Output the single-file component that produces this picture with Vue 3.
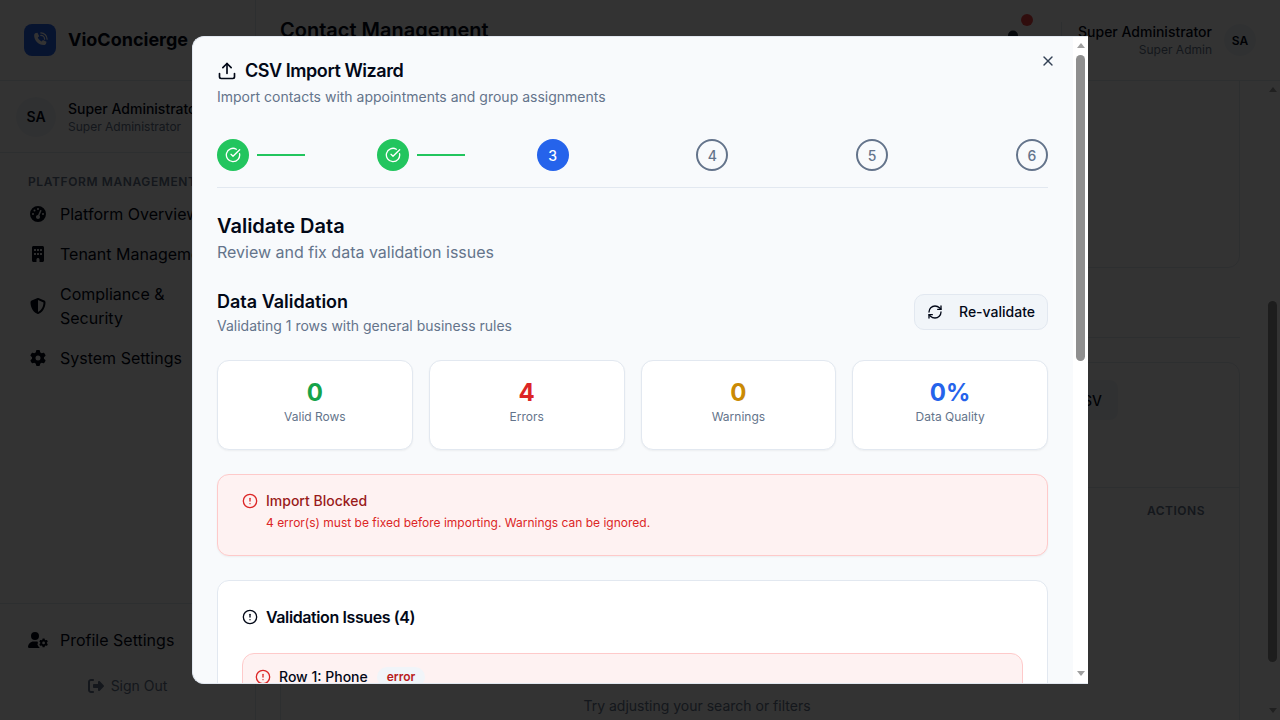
<script setup>
import { onMounted, ref } from 'vue'

const scroller = ref(null)
onMounted(() => {
  if (scroller.value) scroller.value.scrollTop = 360
})

const nav = [
  { label: 'Platform Overview', icon: 'gauge' },
  { label: 'Tenant Management', icon: 'building' },
  { label: 'Compliance & Security', icon: 'shield' },
  { label: 'System Settings', icon: 'cog' }
]
const gearPath = 'M495.900 166.600c3.200 8.700 .5 18.400-6.400 24.600l-43.300 39.400c1.100 8.300 1.700 16.800 1.700 25.400s-.6 17.100-1.700 25.400l43.300 39.400c6.900 6.200 9.600 15.900 6.400 24.600c-4.400 11.900-9.700 23.300-15.800 34.300l-4.700 8.100c-6.600 11-14 21.400-22.100 31.200c-5.900 7.200-15.700 9.600-24.500 6.800l-55.700-17.700c-13.400 10.300-28.200 18.900-44 25.400l-12.500 57.100c-2 9.100-9 16.300-18.200 17.800c-13.800 2.300-28 3.500-42.500 3.500s-28.700-1.200-42.500-3.500c-9.200-1.500-16.200-8.700-18.200-17.800l-12.500-57.100c-15.800-6.500-30.600-15.100-44-25.400L83.100 425.900c-8.800 2.800-18.600 .3-24.500-6.800c-8.100-9.800-15.500-20.200-22.100-31.200l-4.700-8.100c-6.100-11-11.400-22.400-15.800-34.300c-3.200-8.700-.5-18.400 6.400-24.600l43.300-39.400C64.600 273.100 64 264.600 64 256s.6-17.100 1.700-25.400L22.400 191.200c-6.900-6.200-9.600-15.900-6.400-24.600c4.400-11.900 9.700-23.300 15.800-34.300l4.700-8.100c6.600-11 14-21.400 22.100-31.200c5.900-7.200 15.700-9.600 24.500-6.800l55.700 17.700c13.400-10.300 28.200-18.900 44-25.400l12.500-57.100c2-9.100 9-16.300 18.200-17.800C227.300 1.200 241.500 0 256 0s28.700 1.200 42.500 3.500c9.200 1.500 16.200 8.700 18.200 17.800l12.500 57.100c15.800 6.500 30.600 15.100 44 25.400l55.700-17.700c8.800-2.800 18.600-.3 24.500 6.800c8.100 9.800 15.500 20.200 22.100 31.200l4.700 8.100c6.100 11 11.400 22.400 15.800 34.300zM256 336a80 80 0 1 0 0-160 80 80 0 1 0 0 160z'
const stats = [
  { value: '0', label: 'Valid Rows', tone: 'green' },
  { value: '4', label: 'Errors', tone: 'red' },
  { value: '0', label: 'Warnings', tone: 'amber' },
  { value: '0%', label: 'Data Quality', tone: 'blue' }
]
const steps = [
  { n: 1, state: 'done' },
  { n: 2, state: 'done' },
  { n: 3, state: 'current' },
  { n: 4, state: 'todo' },
  { n: 5, state: 'todo' },
  { n: 6, state: 'todo' }
]
const issues = [
  { title: 'Row 1: Phone' }
]
</script>

<template>
  <div class="app">
    <aside class="sidebar">
      <div class="brand">
        <span class="logo">
          <svg viewBox="0 0 24 24" width="20" height="20" fill="none">
            <path d="M7.200 3.600 9 3.200l2 4.300-1.700 1.500c.8 2 2.700 3.900 4.700 4.700l1.500-1.700 4.300 2-.4 1.800c-.3 1.300-1.400 2.200-2.700 2.200C9.900 18 4.800 12.100 5 6.300c0-1.300.9-2.400 2.200-2.700Z" fill="#fff"/>
            <path d="M13 6.500a4.500 4.500 0 0 1 4.500 4.500M13 3.500a7.500 7.500 0 0 1 7.500 7.500" stroke="#fff" stroke-width="1.500" stroke-linecap="round"/>
          </svg>
        </span>
        <span class="brand-name">VioConcierge</span>
      </div>
      <div class="who">
        <span class="avatar avatar-lg">SA</span>
        <div>
          <div class="who-name">Super Administrator</div>
          <div class="who-role">Super Administrator</div>
        </div>
      </div>
      <div class="nav-title">PLATFORM MANAGEMENT</div>
      <nav class="nav">
        <a v-for="item in nav" :key="item.label" class="nav-item">
          <svg v-if="item.icon === 'building'" class="nav-icon" viewBox="0 0 384 512" fill="currentColor">
            <path d="M48 0C21.500 0 0 21.500 0 48V464c0 26.500 21.500 48 48 48h96V432c0-26.500 21.500-48 48-48s48 21.500 48 48v80h96c26.500 0 48-21.500 48-48V48c0-26.500-21.500-48-48-48H48zM64 240c0-8.800 7.200-16 16-16h32c8.800 0 16 7.200 16 16v32c0 8.800-7.200 16-16 16H80c-8.800 0-16-7.200-16-16V240zm112-16h32c8.800 0 16 7.200 16 16v32c0 8.800-7.200 16-16 16H176c-8.800 0-16-7.200-16-16V240c0-8.800 7.200-16 16-16zm80 16c0-8.800 7.200-16 16-16h32c8.800 0 16 7.200 16 16v32c0 8.800-7.200 16-16 16H272c-8.800 0-16-7.200-16-16V240zM80 96h32c8.800 0 16 7.200 16 16v32c0 8.800-7.200 16-16 16H80c-8.800 0-16-7.200-16-16V112c0-8.800 7.200-16 16-16zm80 16c0-8.800 7.200-16 16-16h32c8.800 0 16 7.200 16 16v32c0 8.800-7.200 16-16 16H176c-8.800 0-16-7.200-16-16V112zM272 96h32c8.800 0 16 7.200 16 16v32c0 8.800-7.200 16-16 16H272c-8.800 0-16-7.200-16-16V112c0-8.800 7.200-16 16-16z"/>
          </svg>
          <svg v-else class="nav-icon" viewBox="0 0 512 512" fill="currentColor">
            <path v-if="item.icon === 'gauge'" d="M0 256a256 256 0 1 1 512 0A256 256 0 1 1 0 256zM288 96a32 32 0 1 0 -64 0 32 32 0 1 0 64 0zM256 416c35.300 0 64-28.700 64-64c0-17.400-6.900-33.100-18.100-44.600L366 161.700c5.300-12.100-.2-26.300-12.300-31.600s-26.300 .2-31.600 12.300L257.900 288c-.6 0-1.300 0-1.900 0c-35.300 0-64 28.700-64 64s28.700 64 64 64zM176 144a32 32 0 1 0 -64 0 32 32 0 1 0 64 0zM96 288a32 32 0 1 0 0-64 32 32 0 1 0 0 64zm352-32a32 32 0 1 0 -64 0 32 32 0 1 0 64 0z"/>
            <path v-else-if="item.icon === 'shield'" d="M256 0c4.600 0 9.200 1 13.400 2.900L457.700 82.800c22 9.300 38.400 31 38.300 57.200c-.5 99.200-41.300 280.700-213.600 363.200c-16.700 8-36.100 8-52.800 0C57.300 420.700 16.500 239.200 16 140c-.1-26.200 16.300-47.900 38.300-57.200L242.700 2.900C246.800 1 251.400 0 256 0zm0 66.800V444.800C394 378 431.100 230.100 432 141.400L256 66.800l0 0z"/>
            <path v-else :d="gearPath"/>
          </svg>
          <span class="nav-label">{{ item.label }}</span>
        </a>
      </nav>
      <div class="side-foot">
        <a class="nav-item">
          <svg class="nav-icon nav-icon-wide" viewBox="0 0 640 512" fill="currentColor">
            <path d="M224 0a128 128 0 1 1 0 256A128 128 0 1 1 224 0zM178.300 304h91.400c11.800 0 23.400 1.200 34.500 3.300c-2.100 18.500 7.400 35.600 21.800 44.800c-16.600 10.600-26.700 31.600-20 53.300c4 12.900 9.400 25.500 16.400 37.600s15.200 23.100 24.400 33c8 8.600 14 15 25 24v12H29.700C13.300 512 0 498.700 0 482.300C0 383.800 79.800 304 178.300 304z"/>
            <path transform="translate(358 208) scale(.55)" :d="gearPath"/>
          </svg>
          <span class="nav-label">Profile Settings</span>
        </a>
        <a class="sign-out">
          <svg viewBox="0 0 512 512" width="16" height="16" fill="currentColor">
            <path d="M377.900 105.900L500.700 228.700c7.200 7.200 11.300 17.100 11.300 27.300s-4.100 20.100-11.300 27.300L377.900 406.100c-6.400 6.400-15 9.900-24 9.900c-18.700 0-33.900-15.200-33.900-33.900l0-62.100-128 0c-17.700 0-32-14.300-32-32l0-64c0-17.700 14.300-32 32-32l128 0 0-62.100c0-18.700 15.200-33.900 33.900-33.900c9 0 17.600 3.600 24 9.900zM160 96L96 96c-17.700 0-32 14.300-32 32l0 256c0 17.700 14.300 32 32 32l64 0c17.700 0 32 14.300 32 32s-14.300 32-32 32l-64 0c-53 0-96-43-96-96L0 128C0 75 43 32 96 32l64 0c17.700 0 32 14.300 32 32s-14.300 32-32 32z"/>
          </svg>
          <span>Sign Out</span>
        </a>
      </div>
    </aside>

    <div class="main">
      <header class="topbar">
        <h1 class="page-title">Contact Management</h1>
        <div class="top-right">
          <span class="bell">
            <svg viewBox="0 0 24 24" width="20" height="20" fill="#1e293b"><path d="M12 3a6 6 0 0 0-6 6c0 6-2.500 8-2.500 8h17S18 15 18 9a6 6 0 0 0-6-6Z"/></svg>
            <i class="bell-dot"></i>
          </span>
          <div class="top-user">
            <div class="who-name">Super Administrator</div>
            <div class="who-role">Super Admin</div>
          </div>
          <span class="avatar avatar-sm">SA</span>
        </div>
      </header>
      <div class="main-body">
        <div ref="scroller" class="content">
          <section class="panel panel-top"></section>
          <div class="tabs"></div>
          <section class="panel panel-list">
            <div class="toolbar">
              <button class="ghost-btn">Export CSV</button>
            </div>
            <div class="table-head">
              <span>ACTIONS</span>
            </div>
            <div class="empty">Try adjusting your search or filters</div>
          </section>
        </div>
        <div class="sb sb-page">
          <i class="arrow up"></i>
          <i class="thumb"></i>
          <i class="arrow down"></i>
        </div>
      </div>
    </div>

    <div class="overlay">
      <div class="modal" role="dialog">
        <div class="modal-body">
          <div class="modal-head">
            <h2 class="modal-title">
              <svg viewBox="0 0 24 24" width="20" height="20" fill="none" stroke="currentColor" stroke-width="2" stroke-linecap="round" stroke-linejoin="round"><path d="M21 15v4a2 2 0 0 1-2 2H5a2 2 0 0 1-2-2v-4"/><polyline points="17 8 12 3 7 8"/><line x1="12" y1="3" x2="12" y2="15"/></svg>
              CSV Import Wizard
            </h2>
            <p class="modal-sub">Import contacts with appointments and group assignments</p>
          </div>

          <div class="steps">
            <div v-for="s in steps" :key="s.n" class="step">
              <span class="dot" :class="s.state">
                <svg v-if="s.state === 'done'" viewBox="0 0 24 24" width="16" height="16" fill="none" stroke="currentColor" stroke-width="2" stroke-linecap="round" stroke-linejoin="round"><path d="M21.801 10A10 10 0 1 1 17 3.335"/><path d="m9 11 3 3L22 4"/></svg>
                <template v-else>{{ s.n }}</template>
              </span>
              <span v-if="s.state === 'done'" class="link"></span>
            </div>
          </div>

          <h3 class="section-title">Validate Data</h3>
          <p class="section-sub">Review and fix data validation issues</p>

          <div class="dv-head">
            <div>
              <h4 class="dv-title">Data Validation</h4>
              <p class="dv-sub">Validating 1 rows with general business rules</p>
            </div>
            <button class="revalidate">
              <svg viewBox="0 0 24 24" width="16" height="16" fill="none" stroke="currentColor" stroke-width="2" stroke-linecap="round" stroke-linejoin="round"><path d="M3 12a9 9 0 0 1 9-9 9.750 9.750 0 0 1 6.740 2.740L21 8"/><path d="M21 3v5h-5"/><path d="M21 12a9 9 0 0 1-9 9 9.750 9.750 0 0 1-6.740-2.740L3 16"/><path d="M8 16H3v5"/></svg>
              Re-validate
            </button>
          </div>

          <div class="stats">
            <div v-for="s in stats" :key="s.label" class="stat">
              <div class="stat-value" :class="s.tone">{{ s.value }}</div>
              <div class="stat-label">{{ s.label }}</div>
            </div>
          </div>

          <div class="blocked">
            <svg class="alert-icon" viewBox="0 0 24 24" width="16" height="16" fill="none" stroke="#dc2626" stroke-width="2" stroke-linecap="round" stroke-linejoin="round"><circle cx="12" cy="12" r="10"/><line x1="12" y1="8" x2="12" y2="12"/><line x1="12" y1="16" x2="12.010" y2="16"/></svg>
            <div>
              <div class="blocked-title">Import Blocked</div>
              <div class="blocked-text">4 error(s) must be fixed before importing. Warnings can be ignored.</div>
            </div>
          </div>

          <div class="issues">
            <h4 class="issues-title">
              <svg viewBox="0 0 24 24" width="16" height="16" fill="none" stroke="currentColor" stroke-width="2" stroke-linecap="round" stroke-linejoin="round"><circle cx="12" cy="12" r="10"/><line x1="12" y1="8" x2="12" y2="12"/><line x1="12" y1="16" x2="12.010" y2="16"/></svg>
              Validation Issues (4)
            </h4>
            <div v-for="it in issues" :key="it.title" class="issue">
              <div class="issue-head">
                <svg viewBox="0 0 24 24" width="16" height="16" fill="none" stroke="#dc2626" stroke-width="2" stroke-linecap="round" stroke-linejoin="round"><circle cx="12" cy="12" r="10"/><line x1="12" y1="8" x2="12" y2="12"/><line x1="12" y1="16" x2="12.010" y2="16"/></svg>
                <span class="issue-title">{{ it.title }}</span>
                <span class="badge">error</span>
              </div>
            </div>
          </div>
        </div>

        <div class="sb sb-modal">
          <i class="arrow up"></i>
          <i class="thumb"></i>
          <i class="arrow down"></i>
        </div>

        <button class="close" aria-label="Close">
          <svg viewBox="0 0 24 24" width="16" height="16" fill="none" stroke="currentColor" stroke-width="2" stroke-linecap="round" stroke-linejoin="round"><path d="M18 6 6 18"/><path d="m6 6 12 12"/></svg>
        </button>
      </div>
    </div>
  </div>
</template>

<style>
html, body { margin: 0; height: 100%; overflow: hidden; background: #fff; }
</style>

<style scoped>
* { box-sizing: border-box; }
.app {
  display: flex;
  width: 1280px;
  height: 720px;
  position: relative;
  overflow: hidden;
  font-family: Inter, "Noto Sans", sans-serif;
  color: #020817;
  background: #fff;
}
.sidebar {
  width: 256px;
  flex: none;
  display: flex;
  flex-direction: column;
  border-right: 1px solid #e2e8f0;
  height: 720px;
}
.brand {
  height: 81px;
  display: flex;
  align-items: center;
  gap: 12px;
  padding: 0 24px;
  border-bottom: 1px solid #e2e8f0;
  flex: none;
}
.logo {
  width: 32px;
  height: 32px;
  border-radius: 8px;
  background: #2563eb;
  display: flex;
  align-items: center;
  justify-content: center;
}
.brand-name { font-size: 18px; font-weight: 700; white-space: nowrap; line-height: 28px; }
.who {
  height: 72px;
  flex: none;
  display: flex;
  align-items: center;
  gap: 12px;
  padding: 0 16px;
  border-bottom: 1px solid #e2e8f0;
  white-space: nowrap;
}
.avatar {
  border-radius: 50%;
  background: #f1f5f9;
  display: flex;
  align-items: center;
  justify-content: center;
  font-weight: 600;
  flex: none;
}
.avatar-lg { width: 40px; height: 40px; font-size: 14px; }
.avatar-sm { width: 32px; height: 32px; font-size: 12px; }
.who-name { font-size: 14px; font-weight: 500; line-height: 20px; white-space: nowrap; }
.who-role { font-size: 12px; line-height: 16px; color: #64748b; white-space: nowrap; }
.nav-title {
  margin: 21px 0 0 28px;
  font-size: 12px;
  line-height: 16px;
  font-weight: 600;
  letter-spacing: 0.6px;
  color: #64748b;
  white-space: nowrap;
}
.nav { display: flex; flex-direction: column; gap: 8px; padding: 0 16px; margin-top: 8px; width: 200px; }
.nav-item {
  display: flex;
  align-items: center;
  gap: 12px;
  padding: 4px 0 4px 14px;
  font-size: 16px;
  line-height: 24px;
  color: #020817;
  min-height: 32px;
}
.nav-label { display: block; width: 140px; flex: none; }
.nav .nav-item:first-child .nav-label, .nav .nav-item:nth-child(2) .nav-label { white-space: nowrap; }
.nav-icon { width: 16px; height: 16px; flex: none; margin-right: 2px; }
.nav-icon-wide { width: 20px; margin-left: -2px; margin-right: 0; }
.side-foot { margin-top: auto; border-top: 1px solid #e2e8f0; padding: 20px 16px 0; height: 117px; }
.sign-out {
  display: flex;
  align-items: center;
  justify-content: center;
  gap: 7px;
  font-size: 14px;
  line-height: 20px;
  color: #64748b;
  margin-top: 20px;
}
.main { flex: 1; min-width: 0; display: flex; flex-direction: column; height: 720px; }
.topbar {
  height: 81px;
  flex: none;
  display: flex;
  align-items: flex-start;
  justify-content: space-between;
  padding: 16px 24px 0;
  border-bottom: 1px solid #e2e8f0;
}
.page-title { margin: 0; font-size: 20px; line-height: 28px; font-weight: 600; }
.top-right { display: flex; align-items: center; height: 40px; margin-top: 4px; }
.bell { position: relative; width: 20px; height: 20px; margin-right: 38px; align-self: flex-start; margin-top: 8px; }
.bell-dot {
  position: absolute;
  width: 12px;
  height: 12px;
  border-radius: 50%;
  background: #ef4444;
  left: 18px;
  top: -14px;
}
.top-user { text-align: right; margin-right: 12px; border-left: 1px solid #e2e8f0; padding-left: 16px; }
.main-body { flex: 1; min-height: 0; display: flex; }
.content { flex: 1; min-width: 0; overflow-y: auto; padding: 24px 25px 24px 24px; }
.panel { border: 1px solid #e2e8f0; border-radius: 12px; }
.panel-top { height: 523px; }
.tabs { height: 70px; border-bottom: 1px solid #e2e8f0; }
.panel-list { margin-top: 24px; }
.toolbar { height: 125px; border-bottom: 1px solid #e2e8f0; display: flex; justify-content: flex-end; padding: 17px 121px 0 0; }
.ghost-btn {
  height: 40px;
  padding: 0 16px;
  border: 0;
  border-radius: 8px;
  background: #f1f5f9;
  font: 500 14px Inter, sans-serif;
  color: #020817;
}
.table-head {
  height: 44px;
  display: flex;
  justify-content: flex-end;
  align-items: center;
  padding-right: 34px;
  font-size: 12px;
  font-weight: 600;
  letter-spacing: 0.5px;
  color: #64748b;
}
.empty { padding: 164px 126px 80px 0; text-align: center; font-size: 14px; line-height: 20px; color: #64748b; }

.sb {
  width: 15px;
  flex: none;
  background: #fff;
  display: flex;
  flex-direction: column;
  align-items: center;
}
.arrow { width: 0; height: 0; border-left: 4.500px solid transparent; border-right: 4.500px solid transparent; flex: none; }
.arrow.up { border-bottom: 5px solid #a0a0a0; }
.arrow.down { border-top: 5px solid #a0a0a0; margin-top: auto; }
.thumb { width: 9px; background: #8f8f8f; border-radius: 4.500px; flex: none; }
.sb-page { padding: 6px 0 7px; }
.sb-page .thumb { height: 361px; margin-top: 209px; }
.sb-modal { padding: 6px 0 7px; }
.sb-modal .thumb { height: 306px; margin-top: 7px; }

.overlay {
  position: absolute;
  inset: 0;
  background: rgba(0, 0, 0, 0.8);
  z-index: 10;
}
.modal {
  position: absolute;
  left: 192px;
  top: 36px;
  width: 896px;
  height: 648px;
  display: flex;
  overflow: hidden;
  background: #f8fafc;
  border: 1px solid #e2e8f0;
  border-right: 0;
  border-radius: 12px 0 0 12px;
}
.modal-body { flex: 1; min-width: 0; overflow-y: auto; padding: 24px 25px 24px 24px; }
.close {
  position: absolute;
  top: 16px;
  right: 32px;
  width: 16px;
  height: 16px;
  padding: 0;
  border: 0;
  background: none;
  color: #334155;
  display: flex;
}
.modal-head { display: flex; flex-direction: column; }
.modal-title {
  margin: 0;
  display: flex;
  align-items: center;
  gap: 8px;
  font-size: 18px;
  line-height: 20px;
  font-weight: 600;
  letter-spacing: -0.45px;
}
.modal-sub { margin: 6px 0 0; font-size: 14px; line-height: 20px; color: #64748b; }
.steps {
  display: flex;
  justify-content: space-between;
  margin-top: 32px;
  padding-bottom: 16px;
  border-bottom: 1px solid #e2e8f0;
}
.step { display: flex; align-items: center; gap: 8px; width: 32px; }
.dot {
  width: 32px;
  height: 32px;
  border-radius: 50%;
  display: flex;
  align-items: center;
  justify-content: center;
  font-size: 14px;
  font-weight: 500;
  flex: none;
}
.dot.done { background: #22c55e; color: #fff; }
.dot.current { background: #2563eb; color: #fff; }
.dot.todo { border: 2px solid #64748b; color: #64748b; }
.link { width: 48px; height: 2px; background: #22c55e; flex: none; }
.section-title { margin: 26px 0 0; font-size: 20px; line-height: 24px; font-weight: 600; }
.section-sub { margin: 2px 0 0; font-size: 16px; line-height: 24px; color: #64748b; }
.dv-head { display: flex; justify-content: space-between; align-items: center; margin-top: 24px; }
.dv-title { margin: 0; font-size: 18px; line-height: 28px; font-weight: 600; }
.dv-sub { margin: 0; font-size: 14px; line-height: 20px; color: #64748b; }
.revalidate {
  display: flex;
  align-items: center;
  gap: 16px;
  height: 36px;
  padding: 0 12px 1px;
  border: 1px solid #e2e8f0;
  border-radius: 10px;
  background: #f1f5f9;
  color: #020817;
  font: 500 14px Inter, sans-serif;
}
.stats { display: grid; grid-template-columns: repeat(4, 1fr); gap: 16px; margin-top: 24px; }
.stat {
  height: 90px;
  background: #fff;
  border: 1px solid #e2e8f0;
  border-radius: 12px;
  box-shadow: 0 1px 2px rgba(0, 0, 0, 0.05);
  text-align: center;
  padding-top: 16px;
}
.stat-value { font-size: 24px; line-height: 32px; font-weight: 700; }
.stat-value.green { color: #16a34a; }
.stat-value.red { color: #dc2626; }
.stat-value.amber { color: #ca8a04; }
.stat-value.blue { color: #2563eb; }
.stat-label { font-size: 12px; line-height: 16px; color: #64748b; }
.blocked {
  display: flex;
  gap: 8px;
  height: 82px;
  margin-top: 24px;
  padding: 16px 24px;
  background: #fef2f2;
  border: 1px solid #fecaca;
  border-radius: 12px;
  box-shadow: 0 1px 2px rgba(0, 0, 0, 0.05);
}
.alert-icon { margin-top: 2px; flex: none; }
.blocked-title { font-size: 14px; line-height: 20px; font-weight: 500; color: #991b1b; }
.blocked-text { font-size: 12px; line-height: 16px; margin-top: 4px; color: #dc2626; }
.issues {
  margin-top: 24px;
  padding: 24px;
  background: #fff;
  border: 1px solid #e2e8f0;
  border-radius: 12px;
}
.issues-title {
  margin: 0 0 24px;
  display: flex;
  align-items: center;
  gap: 8px;
  font-size: 16px;
  line-height: 24px;
  font-weight: 600;
  letter-spacing: -0.4px;
}
.issue {
  background: #fef2f2;
  border: 1px solid #fecaca;
  border-radius: 12px;
  padding: 12px;
  height: 118px;
}
.issue-head { display: flex; align-items: center; gap: 8px; }
.issue-title { font-size: 14px; line-height: 22px; font-weight: 500; margin-right: 1px; }
.badge {
  font-size: 12px;
  line-height: 16px;
  font-weight: 600;
  color: #b91c1c;
  background: #f1f5f9;
  border-radius: 999px;
  padding: 2px 10px;
}
</style>
